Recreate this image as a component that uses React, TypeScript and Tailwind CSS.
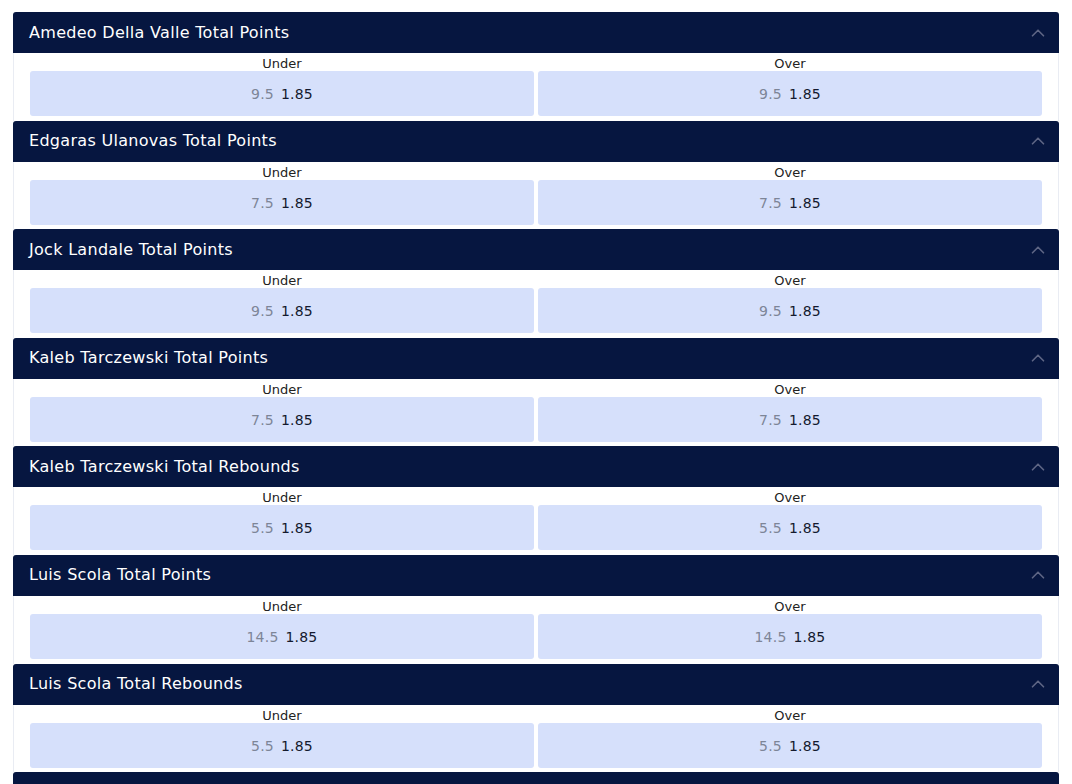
import { ChevronUp } from "lucide-react";

type Market = {
  title: string;
  line: string;
  odds: string;
};

const markets: Market[] = [
  { title: "Amedeo Della Valle Total Points", line: "9.5", odds: "1.85" },
  { title: "Edgaras Ulanovas Total Points", line: "7.5", odds: "1.85" },
  { title: "Jock Landale Total Points", line: "9.5", odds: "1.85" },
  { title: "Kaleb Tarczewski Total Points", line: "7.5", odds: "1.85" },
  { title: "Kaleb Tarczewski Total Rebounds", line: "5.5", odds: "1.85" },
  { title: "Luis Scola Total Points", line: "14.5", odds: "1.85" },
  { title: "Luis Scola Total Rebounds", line: "5.5", odds: "1.85" },
  { title: "Marcos Delia Total Points", line: "7.5", odds: "1.85" },
];

function Outcome({ label, line, odds }: { label: string; line: string; odds: string }) {
  return (
    <div className="flex flex-col">
      <div className="h-[18px] pt-[3px] text-center text-[13px] leading-[15px] text-[#222]">{label}</div>
      <button className="flex h-[45px] items-center justify-center gap-[7px] rounded-[3px] bg-[#d6e0fb] pt-[2px] text-[14px] tracking-[0.2px]">
        <span className="text-[#7d8597]">{line}</span>
        <span className="text-[#141a2e]">{odds}</span>
      </button>
    </div>
  );
}

function MarketBlock({ market }: { market: Market }) {
  return (
    <div className="flex flex-col">
      <div className="flex h-[41px] items-center justify-between rounded-t-[3px] bg-[#061640] pl-4 pr-[10px]">
        <span className="text-[16px] tracking-[0.3px] text-white">{market.title}</span>
        <ChevronUp size={22} strokeWidth={1.8} className="text-[#5e6685]" />
      </div>
      <div className="grid grid-cols-2 gap-1 border-x border-[#e9ecf3] bg-white px-4 pb-[4.6px]">
        <Outcome label="Under" line={market.line} odds={market.odds} />
        <Outcome label="Over" line={market.line} odds={market.odds} />
      </div>
    </div>
  );
}

export default function App() {
  return (
    <div
      className="h-[784px] overflow-hidden bg-white px-[13px] pt-3"
      style={{ fontFamily: '"DejaVu Sans", Verdana, sans-serif' }}
    >
      {markets.map((m) => (
        <MarketBlock key={m.title} market={m} />
      ))}
    </div>
  );
}
